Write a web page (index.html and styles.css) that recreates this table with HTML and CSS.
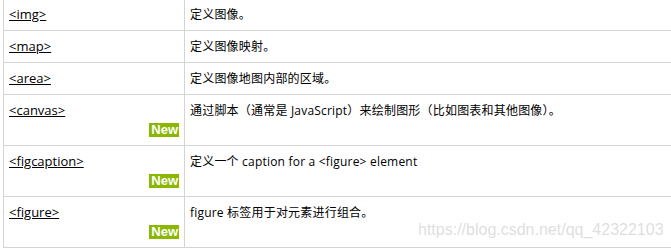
FILE: index.html
```html
<!DOCTYPE html>
<html lang="zh-CN">
<head>
<meta charset="utf-8">
<title>HTML 图像标签</title>
<link rel="stylesheet" href="styles.css">
</head>
<body>
<div class="page">
  <table class="ref">
    <colgroup><col class="c-tag"><col class="c-desc"></colgroup>
    <tbody>
      <tr><td><a href="#">&lt;img&gt;</a></td><td class="desc">定义图像。</td></tr>
      <tr><td><a href="#">&lt;map&gt;</a></td><td class="desc">定义图像映射。</td></tr>
      <tr><td><a href="#">&lt;area&gt;</a></td><td class="desc">定义图像地图内部的区域。</td></tr>
      <tr><td><a href="#">&lt;canvas&gt;</a><div class="new-row"><span class="new">New</span></div></td><td class="desc">通过脚本（通常是 JavaScript）来绘制图形（比如图表和其他图像）。</td></tr>
      <tr><td><a href="#">&lt;figcaption&gt;</a><div class="new-row"><span class="new">New</span></div></td><td class="desc">定义一个 caption for a &lt;figure&gt; element</td></tr>
      <tr><td><a href="#">&lt;figure&gt;</a><div class="new-row"><span class="new">New</span></div></td><td class="desc">figure 标签用于对元素进行组合。</td></tr>
    </tbody>
  </table>
  <div class="watermark">https://blog.csdn.net/qq_42322103</div>
</div>
</body>
</html>
```
FILE: styles.css
```css
html, body {
  margin: 0;
  padding: 0;
  background: #ffffff;
  overflow: hidden;
}
.page {
  position: relative;
  width: 671px;
  height: 248px;
  overflow: hidden;
  padding-left: 3px;
  box-sizing: border-box;
  font-family: "Open Sans", "Noto Sans CJK SC", sans-serif;
  font-size: 12px;
  color: #000;
}
.ref {
  border-collapse: collapse;
  width: 690px;
  margin-top: -2px;
  table-layout: fixed;
}
.c-tag { width: 181px; }
.ref td {
  border: 1px solid #d4d4d4;
  padding: 6px 5px;
  line-height: 19px;
  vertical-align: top;
}
.ref .desc {
  letter-spacing: 0.2px;
}
.ref a {
  color: #000;
  font-size: 13px;
  text-decoration: underline;
}
.new-row {
  text-align: right;
  height: 19px;
}
.new {
  display: inline-block;
  margin-top: 2px;
  background: #8ab800;
  color: #fff;
  font-family: "Liberation Sans", Arial, sans-serif;
  font-weight: bold;
  font-size: 13px;
  line-height: 14px;
  padding: 0 1px 0 2px;
}
.watermark {
  position: absolute;
  left: 418px;
  top: 221px;
  font-family: "Liberation Sans", Arial, sans-serif;
  font-size: 16px;
  color: rgba(200, 200, 200, 0.6);
  white-space: nowrap;
}
```
